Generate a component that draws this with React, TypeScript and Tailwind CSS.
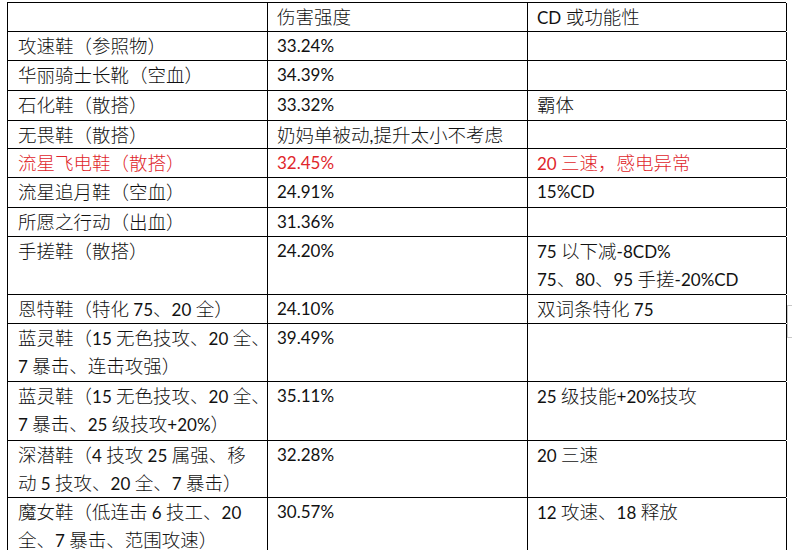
const rows: { h: number; a: string[]; b: string; c: string[]; red?: boolean }[] = [
  { h: 29, a: [''], b: '伤害强度', c: ['CD 或功能性'] },
  { h: 29, a: ['攻速鞋（参照物）'], b: '33.24%', c: [''] },
  { h: 30, a: ['华丽骑士长靴（空血）'], b: '34.39%', c: [''] },
  { h: 30, a: ['石化鞋（散搭）'], b: '33.32%', c: ['霸体'] },
  { h: 28, a: ['无畏鞋（散搭）'], b: '奶妈单被动,提升太小不考虑', c: [''] },
  { h: 29, a: ['流星飞电鞋（散搭）'], b: '32.45%', c: ['20 三速，感电异常'], red: true },
  { h: 30, a: ['流星追月鞋（空血）'], b: '24.91%', c: ['15%CD'] },
  { h: 29, a: ['所愿之行动（出血）'], b: '31.36%', c: [''] },
  { h: 58, a: ['手搓鞋（散搭）'], b: '24.20%', c: ['75 以下减-8CD%', '75、80、95 手搓-20%CD'] },
  { h: 29, a: ['恩特鞋（特化 75、20 全）'], b: '24.10%', c: ['双词条特化 75'] },
  { h: 58, a: ['蓝灵鞋（15 无色技攻、20 全、', '7 暴击、连击攻强）'], b: '39.49%', c: [''] },
  { h: 59, a: ['蓝灵鞋（15 无色技攻、20 全、', '7 暴击、25 级技攻+20%）'], b: '35.11%', c: ['25 级技能+20%技攻'] },
  { h: 57, a: ['深潜鞋（4 技攻 25 属强、移', '动 5 技攻、20 全、7 暴击）'], b: '32.28%', c: ['20 三速'] },
  { h: 58, a: ['魔女鞋（低连击 6 技工、20', '全、7 暴击、范围攻速）'], b: '30.57%', c: ['12 攻速、18 释放'] },
];

// CJK runs and latin runs get different sizes, as Word's SimSun + Calibri do
function Mixed({ text }: { text: string }) {
  const parts = text.split(/([\u3000-\u9fff\uff00-\uffef]+)/).filter(Boolean);
  return (
    <>
      {parts.map((p, i) =>
        /[\u3000-\u9fff\uff00-\uffef]/.test(p) ? (
          <span key={i} className="text-[18.5px] font-light">
            {p}
          </span>
        ) : (
          <span key={i} className="text-[17px]">
            {p}
          </span>
        )
      )}
    </>
  );
}

function Lines({ items }: { items: string[] }) {
  return (
    <>
      {items.map((t, i) => (
        <div key={i} className="whitespace-nowrap h-[28px] leading-[28px]">
          <Mixed text={t} />
        </div>
      ))}
    </>
  );
}

export default function App() {
  return (
    <div className="relative w-[792px] h-[550px] overflow-hidden bg-white pt-[2px] pl-[7px] leading-[28px] text-[#111] [font-family:Lato,'Noto_Sans_CJK_SC',sans-serif]">
      <div className="w-[779px] border-t border-l border-black">
        {rows.map((r, i) => (
          <div
            key={i}
            style={{ height: r.h }}
            className={`flex border-b border-black ${r.red ? 'text-[#e0262b]' : ''}`}
          >
            <div className="w-[260px] shrink-0 border-r border-black pl-[10px]">
              <Lines items={r.a} />
            </div>
            <div className="w-[260px] shrink-0 border-r border-black pl-[9px]">
              <Lines items={[r.b]} />
            </div>
            <div className="w-[259px] shrink-0 border-r border-black pl-[9px]">
              <Lines items={r.c} />
            </div>
          </div>
        ))}
      </div>
      <div className="absolute left-[787px] top-[305px] w-[5px] h-[33px] border-l border-t border-b border-[#c8c8c8]" />
    </div>
  );
}
